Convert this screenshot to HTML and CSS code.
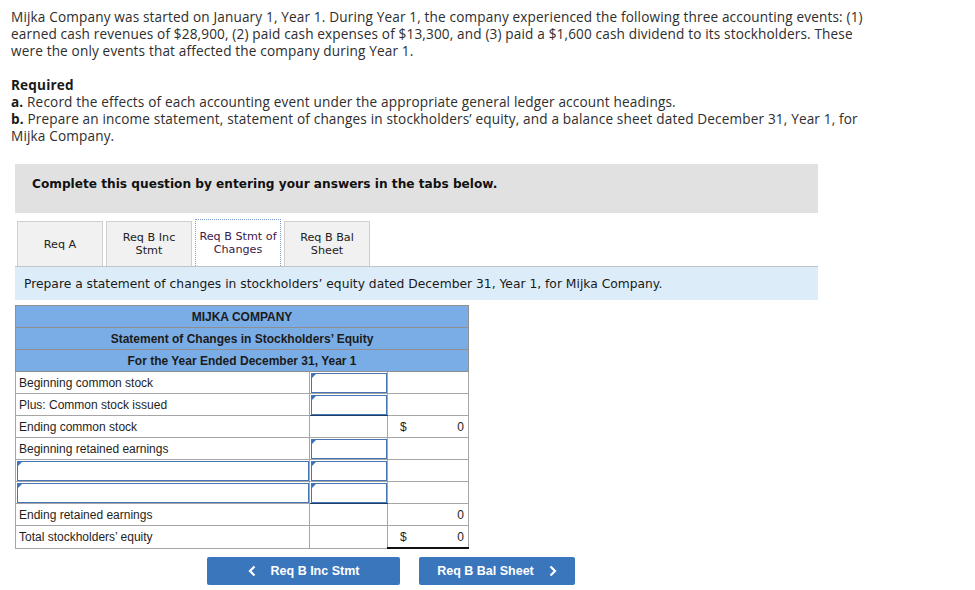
FILE: index.html
```html
<!DOCTYPE html>
<html>
<head>
<meta charset="utf-8">
<link rel="stylesheet" href="styles.css">
</head>
<body>
<div class="page">
  <div class="intro">
    <p>Mijka Company was started on January 1, Year 1. During Year 1, the company experienced the following three accounting events: (1)<br>earned cash revenues of $28,900, (2) paid cash expenses of $13,300, and (3) paid a $1,600 cash dividend to its stockholders. These<br>were the only events that affected the company during Year 1.</p>
    <p><b>Required</b><br>
    <b>a.</b> Record the effects of each accounting event under the appropriate general ledger account headings.<br>
    <b>b.</b> Prepare an income statement, statement of changes in stockholders’ equity, and a balance sheet dated December 31, Year 1, for<br>Mijka Company.</p>
  </div>

  <div class="notice">Complete this question by entering your answers in the tabs below.</div>

  <div class="tabs">
    <div class="tab">Req A</div>
    <div class="tab">Req B Inc<br>Stmt</div>
    <div class="tab active">Req B Stmt of<br>Changes</div>
    <div class="tab">Req B Bal<br>Sheet</div>
  </div>
  <div class="instr">Prepare a statement of changes in stockholders’ equity dated December 31, Year 1, for Mijka Company.</div>

  <table class="stmt">
    <colgroup><col class="w1"><col class="w2"><col class="w3"></colgroup>
    <tr class="head"><td colspan="3">MIJKA COMPANY</td></tr>
    <tr class="head"><td colspan="3">Statement of Changes in Stockholders’ Equity</td></tr>
    <tr class="head"><td colspan="3">For the Year Ended December 31, Year 1</td></tr>
    <tr><td class="lbl">Beginning common stock</td><td class="inp"><span class="tri"></span></td><td></td></tr>
    <tr><td class="lbl">Plus: Common stock issued</td><td class="inp sum"><span class="tri"></span></td><td></td></tr>
    <tr><td class="lbl">Ending common stock</td><td></td><td class="num"><span class="dol">$</span>0</td></tr>
    <tr><td class="lbl">Beginning retained earnings</td><td class="inp"><span class="tri"></span></td><td></td></tr>
    <tr><td class="lbl inp"><span class="tri"></span></td><td class="inp"><span class="tri"></span></td><td></td></tr>
    <tr><td class="lbl inp"><span class="tri"></span></td><td class="inp sum"><span class="tri"></span></td><td></td></tr>
    <tr><td class="lbl">Ending retained earnings</td><td></td><td class="num">0</td></tr>
    <tr><td class="lbl">Total stockholders’ equity</td><td></td><td class="num total"><span class="dol">$</span>0</td></tr>
  </table>

  <div class="nav">
    <div class="btn prev"><svg class="chev" width="8" height="12" viewBox="0 0 8 12"><path d="M6.5 1.5 L2 6 L6.5 10.5" fill="none" stroke="#fff" stroke-width="2.2"/></svg>Req B Inc Stmt</div>
    <div class="btn next">Req B Bal Sheet<svg class="chev" width="8" height="12" viewBox="0 0 8 12"><path d="M1.5 1.5 L6 6 L1.5 10.5" fill="none" stroke="#fff" stroke-width="2.2"/></svg></div>
  </div>
</div>
</body>
</html>
```

FILE: styles.css
```css
html, body {
  margin: 0;
  padding: 0;
  background: #fff;
}
.page {
  padding: 8px 0 0 11px;
  width: 940px;
}
.intro {
  font-family: "Open Sans", "Liberation Sans", sans-serif;
  font-size: 13.6px;
  line-height: 17px;
  letter-spacing: 0.15px;
  color: #2e2e2e;
  white-space: nowrap;
}
.intro p {
  margin: 0 0 17px 0;
}
.intro b {
  font-weight: 700;
  color: #1a1a1a;
}
.notice {
  margin: 20px 0 0 4px;
  width: 786px;
  height: 49px;
  background: #e1e1e1;
  padding-left: 17px;
  font-family: "DejaVu Sans", Verdana, sans-serif;
  font-weight: bold;
  font-size: 12.15px;
  line-height: 40px;
  color: #111;
}
.tabs {
  display: flex;
  gap: 3px;
  margin: 7px 0 0 6px;
  height: 46px;
  align-items: flex-end;
}
.tab {
  width: 84px;
  height: 44px;
  background: #f1f1f1;
  border: 1px solid #cfcfcf;
  border-bottom: none;
  display: flex;
  align-items: center;
  justify-content: center;
  text-align: center;
  font-family: "DejaVu Sans", Verdana, sans-serif;
  font-size: 11.2px;
  line-height: 13px;
  color: #222;
  position: relative;
  z-index: 1;
}
.tab.active {
  background: #fff;
  border: 1px dotted #7a9cc4;
  border-bottom: none;
  height: 46px;
  color: #3b1a4a;
}
.instr {
  margin-left: 4px;
  width: 794px;
  height: 33px;
  padding-left: 9px;
  background: #dcedf9;
  border-top: 1px solid #c4c4c4;
  font-family: "DejaVu Sans", Verdana, sans-serif;
  font-size: 12.3px;
  line-height: 34px;
  color: #1a1a1a;
}
.stmt {
  margin: 5px 0 0 4px;
  border-collapse: collapse;
  width: 453px;
  font-family: "Liberation Sans", Arial, sans-serif;
  font-size: 12px;
  color: #1e1e1e;
  table-layout: fixed;
}
col.w1 { width: 294px; }
col.w2 { width: 78px; }
col.w3 { width: 81px; }
.stmt td {
  border: 1px solid #a6a6a6;
  height: 21px;
  padding: 0;
  position: relative;
  white-space: nowrap;
}
.stmt tr.head td {
  background: #7aade5;
  text-align: center;
  font-weight: bold;
  border-color: #8f8f8f;
  color: #1b1b1b;
}
.stmt td.lbl {
  padding-left: 3px;
}
.stmt td.inp {
  outline: 1px solid #4576b3;
  outline-offset: -2px;
}
.stmt td.sum {
  border-bottom: 1px solid #1e3d66;
}
.tri {
  position: absolute;
  top: 2px;
  left: 2px;
  width: 0;
  height: 0;
  border-top: 4px solid #3d72c0;
  border-right: 4px solid transparent;
}
.stmt td.num {
  text-align: right;
  padding-right: 4px;
}
.dol {
  float: left;
  padding-left: 12px;
}
.stmt td.total {
  border-top: 1px solid #111;
  border-bottom: 2px solid #111;
}
.nav {
  display: flex;
  gap: 19px;
  margin: 8px 0 0 196px;
}
.btn {
  height: 28px;
  background: #3a76bc;
  border-radius: 2px;
  color: #fff;
  font-family: "Liberation Sans", Arial, sans-serif;
  font-weight: bold;
  font-size: 12.5px;
  display: flex;
  align-items: center;
  justify-content: center;
}
.btn.prev {
  width: 193px;
}
.btn.next {
  width: 156px;
}
.prev .chev {
  margin-right: 15px;
}
.next .chev {
  margin-left: 15px;
}
```
